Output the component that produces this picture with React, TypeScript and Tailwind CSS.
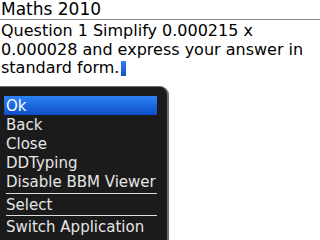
const items = ['Ok', 'Back', 'Close', 'DDTyping', 'Disable BBM Viewer']

export default function App() {
  return (
    <div className="relative w-[320px] h-[240px] overflow-hidden bg-white text-black font-['DejaVu_Sans',sans-serif]">
      <div className="h-[20px] border-b border-[#8a8a8a] px-[1px] text-[17px] leading-[18px]">Maths 2010</div>
      <p className="px-[1px] pt-[2px] text-[16px] leading-[18.5px]">
        Question 1 Simplify 0.000215 x 0.000028 and express your answer in standard form.
        <span className="inline-block w-[5px] h-[15px] align-[-3px] ml-[2px] bg-gradient-to-b from-[#2f7ff5] to-[#1450c0]" />
      </p>

      {/* popup menu */}
      <div className="absolute left-0 top-[86px] bottom-0 w-[169px] rounded-tr-[9px] bg-[#1b1b1b] border-r-2 border-t border-[#6e6e6e] pt-[9px] text-[15px] leading-[19px] text-[#e6e6e6]">
        {items.map((label, i) => (
          <div
            key={label}
            className={
              i === 0
                ? 'mx-[4px] w-[153px] h-[19px] px-[2px] pt-[1px] bg-gradient-to-b from-[#2d82f5] to-[#0f4fc9] text-white'
                : 'mx-[4px] h-[19px] px-[2px] pt-[1px]'
            }
          >
            {label}
          </div>
        ))}
        <div className="mx-[6px] w-[151px] h-[1px] bg-[#dcdcdc] mt-[2px] mb-[1px]" />
        <div className="mx-[4px] h-[19px] px-[2px] pt-[1px]">Select</div>
        <div className="mx-[6px] w-[151px] h-[1px] bg-[#dcdcdc] my-[1px]" />
        <div className="mx-[4px] h-[19px] px-[2px] pt-[1px]">Switch Application</div>
      </div>
    </div>
  )
}
